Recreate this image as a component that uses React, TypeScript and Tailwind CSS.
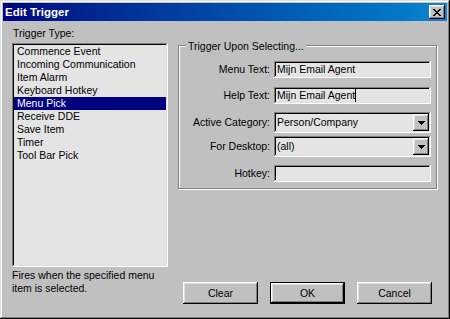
import React from "react";

const raised =
  "shadow-[inset_-1px_-1px_#000000,inset_1px_1px_#ffffff,inset_-2px_-2px_#808080,inset_2px_2px_#dfdfdf]";
const sunken =
  "shadow-[inset_-1px_-1px_#ffffff,inset_1px_1px_#808080,inset_-2px_-2px_#dfdfdf,inset_2px_2px_#000000]";

const items = [
  "Commence Event",
  "Incoming Communication",
  "Item Alarm",
  "Keyboard Hotkey",
  "Menu Pick",
  "Receive DDE",
  "Save Item",
  "Timer",
  "Tool Bar Pick",
];

function CloseGlyph() {
  const rows = [
    "XX....XX",
    ".XX..XX.",
    "..XXXX..",
    "...XX...",
    "..XXXX..",
    ".XX..XX.",
    "XX....XX",
  ];
  const rects: React.ReactElement[] = [];
  rows.forEach((r, y) =>
    r.split("").forEach((c, x) => {
      if (c === "X") rects.push(<rect key={`${x}-${y}`} x={x} y={y} width={1} height={1} fill="#000" />);
    })
  );
  return (
    <svg width="8" height="7" viewBox="0 0 8 7" shapeRendering="crispEdges">
      {rects}
    </svg>
  );
}

function Arrow() {
  return (
    <svg width="7" height="4" viewBox="0 0 7 4" shapeRendering="crispEdges">
      <rect x="0" y="0" width="7" height="1" fill="#000" />
      <rect x="1" y="1" width="5" height="1" fill="#000" />
      <rect x="2" y="2" width="3" height="1" fill="#000" />
      <rect x="3" y="3" width="1" height="1" fill="#000" />
    </svg>
  );
}

function Edit({ value, caret }: { value: string; caret?: boolean }) {
  return (
    <div className={`w-[157px] h-[17px] bg-[#e4e4e4] ${sunken} flex items-center pl-[3px]`}>
      <span className="leading-[13px] whitespace-nowrap">{value}</span>
      {caret && <span className="w-[1px] h-[13px] bg-black" />}
    </div>
  );
}

function Combo({ value }: { value: string }) {
  return (
    <div className={`w-[157px] h-[21px] bg-[#e4e4e4] ${sunken} flex items-stretch p-[2px]`}>
      <span className="flex-1 flex items-center pl-[1px] leading-[13px] whitespace-nowrap">{value}</span>
      <div className={`w-[16px] bg-[#c0c0c0] ${raised} flex items-center justify-center`}>
        <Arrow />
      </div>
    </div>
  );
}

function Button({ label, def }: { label: string; def?: boolean }) {
  if (def) {
    return (
      <div className="w-[75px] h-[22px] border border-black flex">
        <div className={`flex-1 bg-[#c0c0c0] ${raised} flex items-center justify-center leading-[13px]`}>{label}</div>
      </div>
    );
  }
  return (
    <div className={`w-[75px] h-[22px] bg-[#c0c0c0] ${raised} flex items-center justify-center leading-[13px]`}>
      {label}
    </div>
  );
}

function Row({ label, children, mt }: { label: string; children: React.ReactNode; mt: string }) {
  return (
    <div className={`flex items-center ${mt}`}>
      <div className="w-[91px] text-right leading-[13px] whitespace-nowrap">{label}</div>
      <div className="ml-[4px]">{children}</div>
    </div>
  );
}

export default function App() {
  return (
    <div
      className="w-[450px] h-[319px] bg-[#c0c0c0] p-[3px] flex flex-col text-black text-[10.5px] shadow-[inset_-1px_-1px_#000000,inset_1px_1px_#dfdfdf,inset_-2px_-2px_#808080,inset_2px_2px_#ffffff]"
      style={{ fontFamily: '"Liberation Sans", Arial, sans-serif' }}
    >
      {/* Title bar */}
      <div className="h-[18px] flex items-center justify-between bg-gradient-to-r from-[#000080] to-[#1084d0] pl-[2px] pr-[2px]">
        <span className="text-white font-bold text-[11.5px] leading-[14px]">Edit Trigger</span>
        <div className={`w-[16px] h-[14px] bg-[#c0c0c0] ${raised} flex items-center justify-center`}>
          <CloseGlyph />
        </div>
      </div>

      {/* Body */}
      <div className="flex pl-[9px] pt-[6px]">
        {/* Left column */}
        <div className="w-[156px] flex flex-col">
          <div className="leading-[13px] pl-[1px]">Trigger Type:</div>
          <div className={`mt-[3px] h-[224px] bg-[#e4e4e4] ${sunken} p-[2px] flex flex-col`}>
            {items.map((it) => (
              <div
                key={it}
                className={`h-[13px] leading-[13px] pl-[3px] whitespace-nowrap ${
                  it === "Menu Pick" ? "bg-[#000080] text-white" : ""
                }`}
              >
                {it}
              </div>
            ))}
          </div>
          <div className="mt-[2px] leading-[13px]">
            Fires when the specified menu
            <br />
            item is selected.
          </div>
        </div>

        {/* Right column */}
        <div className="ml-[10px] w-[260px] flex flex-col">
          <div className="mt-[18px] relative w-[259px] h-[144px] border border-[#808080] shadow-[inset_1px_1px_#ffffff,1px_1px_#ffffff] pt-[15px] flex flex-col">
            <span className="absolute left-[7px] top-[-6px] px-[2px] bg-[#c0c0c0] leading-[13px] whitespace-nowrap">
              Trigger Upon Selecting...
            </span>
            <Row label="Menu Text:" mt="mt-0">
              <Edit value="Mijn Email Agent" />
            </Row>
            <Row label="Help Text:" mt="mt-[9px]">
              <Edit value="Mijn Email Agent" caret />
            </Row>
            <Row label="Active Category:" mt="mt-[8px]">
              <Combo value="Person/Company" />
            </Row>
            <Row label="For Desktop:" mt="mt-[3px]">
              <Combo value="(all)" />
            </Row>
            <Row label="Hotkey:" mt="mt-[8px]">
              <Edit value="" />
            </Row>
          </div>

          <div className="mt-[93px] ml-[5px] flex gap-[12px]">
            <Button label="Clear" />
            <Button label="OK" def />
            <Button label="Cancel" />
          </div>
        </div>
      </div>
    </div>
  );
}
